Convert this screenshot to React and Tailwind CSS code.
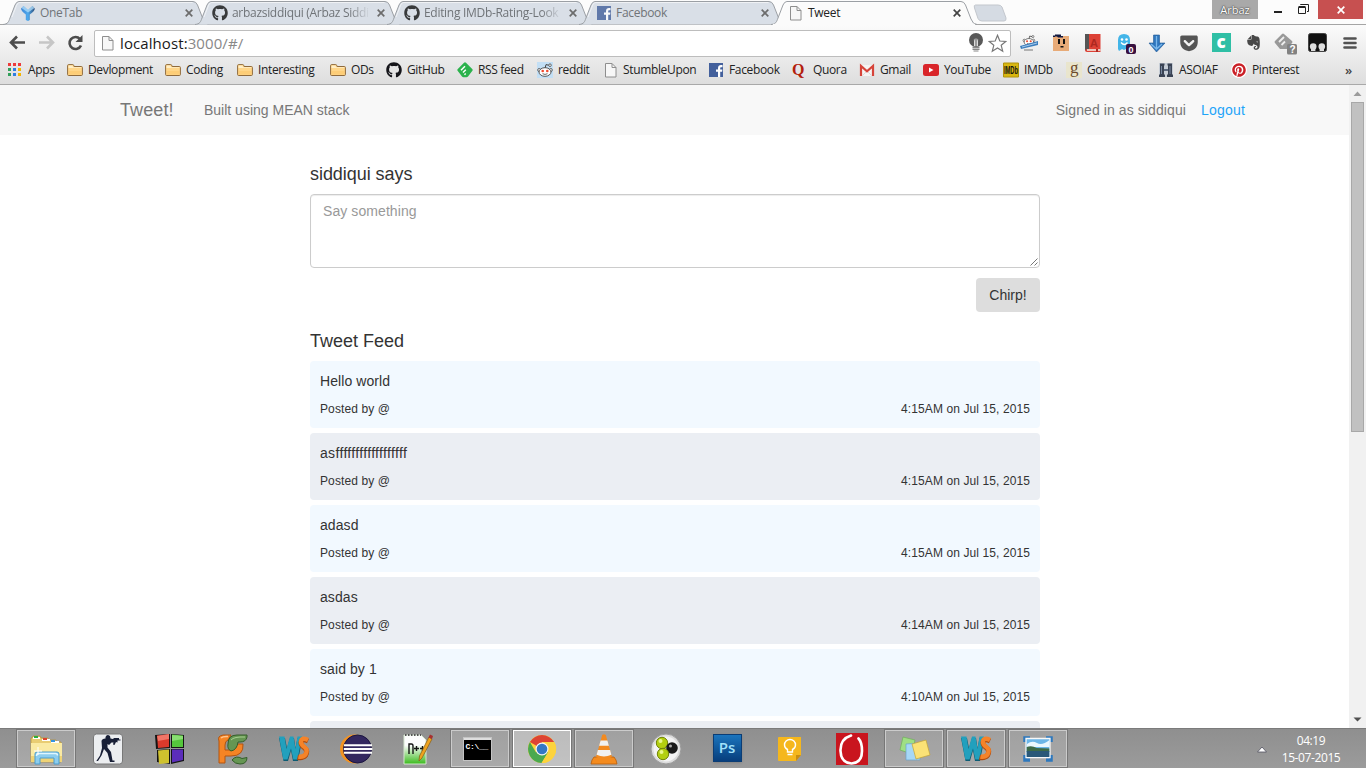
import React from "react";
import { FaGithub, FaPinterest, FaGetPocket, FaEvernote } from "react-icons/fa";

const Svg = ({ s = 16, v = "0 0 16 16", className = "", children }) => (
  <svg width={s} height={s} viewBox={v} className={"shrink-0 " + className}>{children}</svg>
);

/* ---------- small favicons ---------- */
const Page = () => (
  <Svg><path d="M2.500 1.500h6.500l4 4v9.500h-10.500z" fill="#f7f7f7" stroke="#8e8e8e" /><path d="M9 1.500v4h4" fill="none" stroke="#8e8e8e" /></Svg>
);
const Folder = () => (
  <Svg>
    <path d="M.6 12.500V3.600q0-1 1-1h4.200q.8 0 1 1l.3.900h7.300q1 0 1 1v7q0 1-1 1H1.600q-1 0-1-1z" fill="#ffd689" stroke="#8f6a3c" />
    <path d="M1.500 6V4q0-.6.6-.6h3.400L6 5.300h8.200V6z" fill="#ffeec6" />
    <path d="M1.500 9h13v3.500h-13z" fill="#fbc466" opacity=".5" />
  </Svg>
);
const Fb = () => (
  <Svg><path d="M1 1h14v14H1z" fill="#43609c" /><path d="M10 15V9.800H8V7.600h2V6.200C10 4 11.200 3 13 3h1.500v2.200h-1.200c-.9 0-1.100.5-1.100 1.200v1.200h2.200l-.3 2.200h-1.900V15z" fill="#fff" /></Svg>
);
const OneTab = () => (
  <Svg>
    <defs><linearGradient id="ot" x1="0" x2="1"><stop offset="0" stopColor="#1a6fd0" /><stop offset=".5" stopColor="#2b9cf0" /><stop offset="1" stopColor="#062c60" /></linearGradient></defs>
    <path d="M1 3.500Q1 6 5.800 9.500v5.500l2.200 1 1.800-1V9.500Q15 6 14.800 3.500L12.500 1 8 5 3.500 1z" fill="url(#ot)" />
    <path d="M1.500 3 3.500 1 8 4.800 12.500 1l2 2L8 7.500z" fill="#a9dcfb" opacity=".75" />
  </Svg>
);
const Apps = () => (
  <Svg s={14} v="0 0 14 14">
    {["#ed3b3b", "#ed3b3b", "#ed3b3b", "#32a05a", "#2f7de1", "#f4b400", "#32a05a", "#2f7de1", "#f4b400"].map((c, i) => (
      <rect key={i} x={(i % 3) * 5} y={Math.floor(i / 3) * 5} width="3" height="3" fill={c} />
    ))}
  </Svg>
);
const Feedly = () => (
  <Svg>
    <path d="M7 .8q1-1 2 0l6.200 6.200q1 1 0 2L11 14.500q-.6.700-1.500.7h-3q-.9 0-1.500-.7L.8 9q-1-1 0-2z" fill="#2bb24c" />
    <path d="M4 8.300 8 4.300M6 10.500 8.800 7.700M7.500 12.700l1.200-1.200" stroke="#fff" strokeWidth="1.500" fill="none" />
  </Svg>
);
const Alien = () => (
  <g>
    <path d="M8 6.500 9 2.600l3 .7" fill="none" stroke="#444" />
    <circle cx="13" cy="3.200" r="1.300" fill="#fff" stroke="#444" strokeWidth=".8" />
    <circle cx="2.200" cy="8" r="1.500" fill="#fff" stroke="#444" strokeWidth=".8" />
    <circle cx="13.800" cy="8" r="1.500" fill="#fff" stroke="#444" strokeWidth=".8" />
    <ellipse cx="8" cy="10" rx="6" ry="4.300" fill="#fff" stroke="#444" strokeWidth=".9" />
    <circle cx="5.700" cy="9" r="1.300" fill="#f0492d" /><circle cx="10.300" cy="9" r="1.300" fill="#f0492d" />
    <path d="M5.500 11.700q2.500 1.500 5 0" fill="none" stroke="#444" strokeWidth=".8" />
  </g>
);
const Reddit = () => <Svg><path d="M0 0h16v16H0z" fill="#c3dff5" /><Alien /></Svg>;
const Quora = () => <span className="w-4 shrink-0 pr-1 text-center font-['Liberation_Serif',serif] text-[16px] leading-4 font-bold text-[#b3200d]">Q</span>;
const Gmail = () => (
  <Svg><path d="M1 3h14v11H1z" fill="#f6f4f3" /><path d="M2 14V4l6 5.300L14 4v10" fill="none" stroke="#d6443a" strokeWidth="2.200" /><path d="M3.500 13.500 7 10M12.500 13.500 9 10" stroke="#d0d0d0" strokeWidth=".7" /></Svg>
);
const YouTube = () => (
  <Svg><rect x="0" y="2" width="16" height="12" rx="2.500" fill="#d9252a" /><path d="M6 5.500v5l4.500-2.500z" fill="#fff" /></Svg>
);
const Imdb = () => (
  <Svg><path d="M.5 1h15v14H.5z" fill="#d9b70f" stroke="#b0920c" /><text x="1" y="12" fontFamily="Liberation Sans" fontSize="10" fontWeight="bold" textLength="14" lengthAdjust="spacingAndGlyphs" letterSpacing="0" fill="#111">IMDb</text></Svg>
);
const Goodreads = () => (
  <span className="flex h-4 w-4 shrink-0 items-center justify-center bg-[#e9e5cd] pb-1 font-['Liberation_Serif',serif] text-[17px] leading-4 text-[#6b4a2b]">g</span>
);
const Asoiaf = () => (
  <Svg>
    <path d="M1 1h14v14H1z" fill="#c6cdd6" /><path d="M2 1.500h4.500v2H6v9h1V15H1v-2l1-1zM9.500 1.500H14V12l1 1v2H9v-2.500h1v-9h-.5z" fill="#3a4354" />
    <path d="M6 7h4v2H6z" fill="#5d6a80" /><path d="M3.500 4v8M12 4v8" stroke="#7888a0" />
  </Svg>
);

const Ff = "font-['Open_Sans','Noto_Sans',sans-serif]";

const bookmarks = [
  { t: "Apps", i: <Apps />, w: "w-[59px]", g: "gap-[6px]" },
  { t: "Devlopment", i: <Folder />, w: "w-[98px]" },
  { t: "Coding", i: <Folder />, w: "w-[72px]" },
  { t: "Interesting", i: <Folder />, w: "w-[93px]" },
  { t: "ODs", i: <Folder />, w: "w-[56px]" },
  { t: "GitHub", i: <FaGithub size={16} color="#15151a" className="shrink-0" />, w: "w-[71px]" },
  { t: "RSS feed", i: <Feedly />, w: "w-[80px]" },
  { t: "reddit", i: <Reddit />, w: "w-[66px]" },
  { t: "StumbleUpon", i: <Page />, w: "w-[105px]", g: "gap-[4px]" },
  { t: "Facebook", i: <Fb />, w: "w-[84px]" },
  { t: "Quora", i: <Quora />, w: "w-[67px]" },
  { t: "Gmail", i: <Gmail />, w: "w-[64px]" },
  { t: "YouTube", i: <YouTube />, w: "w-[80px]" },
  { t: "IMDb", i: <Imdb />, w: "w-[63px]" },
  { t: "Goodreads", i: <Goodreads />, w: "w-[92px]" },
  { t: "ASOIAF", i: <Asoiaf />, w: "w-[73px]" },
  { t: "Pinterest", i: <span className="rounded-full bg-white p-px"><FaPinterest size={14} color="#cb2027" /></span>, w: "w-[90px]" },
];

/* ---------- tabs ---------- */
const Close = ({ c = "#6c6c6c" }) => (
  <Svg s={8} v="0 0 8 8"><path d="M.7.7l6.600 6.600M7.300.7L.7 7.300" stroke={c} strokeWidth="1.700" /></Svg>
);
function Tab({ icon, title, active, fade }) {
  return (
    <div className={"relative h-[25px] w-[192px] shrink-0 " + (active ? "z-10" : "")}>
      <svg width="208" height="25" viewBox="0 0 208 25" className="absolute top-0 -left-px">
        <path d="M0 24.500C5 24 5.500 22 7 18L12 5Q13.500 1.500 16 1.500H190Q193 1.500 194.500 5L200 19Q202 24.500 206 24.500" fill={active ? "#fbfbfb" : "#d9dfe7"} stroke="#9b9fa4" />
        <path d="M9 17 13.500 5.500Q14.500 2.500 16.500 2.500H189.500" fill="none" stroke="#fff" opacity=".6" />
        {active && <path d="M2 24.500H204" stroke="#fbfbfb" strokeWidth="1.500" />}
      </svg>
      <div className="relative flex h-[25px] items-center pl-4">
        <span className={active ? "" : "opacity-80"}>{icon}</span>
        <div className={"ml-1 w-[138px] text-[12px] leading-[16px] tracking-[-0.3px] whitespace-nowrap " + (active ? "text-[#222]" : "text-[#707478]") + (fade ? " [mask-image:linear-gradient(to_right,#000_85%,transparent)]" : "")}>{title}</div>
        <span className="ml-[7px]"><Close c={active ? "#444" : "#6c6c6c"} /></span>
      </div>
    </div>
  );
}
const gh = <FaGithub size={16} color="#111" />;

/* ---------- extension icons ---------- */
const exts = [
  <Svg key="a" s={20} v="0 0 20 20"><g transform="translate(3.500 1) scale(.8)"><Alien /></g><path d="M1 13 19 8v4L2 16z" fill="#3f7fbd" /><path d="M3 14l15-4" stroke="#a8cbec" /><path d="M5 17h9" stroke="#777" /></Svg>,
  <Svg key="b" s={18} v="0 0 18 18"><path d="M1 2h16v15H1z" fill="#e8ab78" /><path d="M1 3V1.500h2V.5h6V2h2v1.500H6L5 2.500H3V3z" fill="#101840" /><path d="M6 5h2v5H6zM11 5h2v5h-2zM8.500 12h3v1.500h-3z" fill="#111" /></Svg>,
  <Svg key="c" s={18} v="0 0 18 18"><path d="M1 0h15.500v18H3q-2 0-2-2z" fill="#dd4136" /><path d="M1 0h4v15H3q-2 0-2 2z" fill="#555" /><path d="M3 15.200h13.500v1.600H3z" fill="#f2e9df" /><path d="M12 15h2v3h-2z" fill="#b02a22" /><text x="6" y="13" fontFamily="Liberation Sans" fontSize="11" fontWeight="bold" fill="#ad2820">A</text></Svg>,
  <Svg key="d" s={22} v="0 0 22 22"><path d="M4 17V8Q4 2 10 2t6 6v9l-2 1-2-1-2 1-2-1-3 2z" fill="#43b5e8" /><circle cx="8" cy="7.500" r="1.300" fill="#fff" /><circle cx="12.500" cy="7.500" r="1.300" fill="#fff" /><path d="M7 10.500q3.500 4 6.500 0" stroke="#fff" fill="none" strokeWidth="1.300" /><rect x="12" y="12" width="10" height="10" rx="2" fill="#38103f" /><text x="14.500" y="20.500" fontFamily="Liberation Sans" fontSize="9" fontWeight="bold" fill="#fff">0</text></Svg>,
  <Svg key="e" s={18} v="0 0 18 18"><path d="M5.500 1h6v8h5.500l-8.500 9L1 9h4.500z" fill="#2f76bd" stroke="#235b96" strokeWidth=".6" /><path d="M8.500 2v12M3 10l5.500 5 5.500-5" stroke="#7ab8ec" fill="none" strokeWidth="1.300" /></Svg>,
  <FaGetPocket key="f" size={20} color="#555" />,
  <span key="g" className="flex h-[19px] w-[19px] items-center justify-center bg-[#2fbfa5] text-[17px] leading-none font-extrabold text-white"><span className="pb-[3px]">c</span></span>,
  <FaEvernote key="h" size={17} color="#484848" />,
  <Svg key="i" s={24} v="0 0 24 24"><path d="M9 3q1-1 2 0l8 7q1 1 0 2l-5 6H7l-5-6q-1-1 0-2z" fill="#999" /><path d="M6 11l5-5M8.500 14l3.500-3.500" stroke="#eee" strokeWidth="1.800" /><rect x="14" y="13" width="10" height="10.500" rx="1.500" fill="#828282" /><text x="16.500" y="22" fontFamily="Liberation Sans" fontSize="10" fontWeight="bold" fill="#fff">?</text></Svg>,
  <Svg key="j" s={19} v="0 0 19 19"><rect x=".5" y=".5" width="18" height="18" rx="2" fill="#111" stroke="#444" /><circle cx="5.200" cy="13.500" r="3.300" fill="#ddd" /><circle cx="13.800" cy="13.500" r="3.300" fill="#ddd" /><path d="M3 14.500h4.400V18H3zM11.600 14.500H16V18h-4.400z" fill="#ddd" /></Svg>,
  <Svg key="k" s={14} v="0 0 14 14" className="ml-[2px]"><path d="M1.500 2.500h11M1.500 7h11M1.500 11.500h11" stroke="#525252" strokeWidth="2.600" strokeLinecap="round" /></Svg>,
];

/* ---------- taskbar icons ---------- */
const WS = () => (
  <Svg s={32} v="0 0 32 32">
    <path d="M1 5h6l2 10 3-10h4l1.500 10 2-10h5l-4.500 23h-5L13 17.500 10 28H5.500z" fill="#0c5c74" />
    <path d="M1 3.500h5.500L8.500 16l3.500-12.500h3.500L17.500 16l2-12.500h4.500L19.500 26.500h-4.200L13 15.500 9.500 26.500H5.300z" fill="#22a0bd" />
    <path d="M30 8q-6.500-3-7 1.500-.2 3 3.500 5.500t1 7.500q-2.500 3-8 2" fill="none" stroke="#b04a0c" strokeWidth="5" />
    <path d="M30 7q-6.500-3-7 1.500-.2 3 3.500 5.500t1 7.500q-2.500 3-7 2" fill="none" stroke="#f58329" strokeWidth="4.400" />
  </Svg>
);
const Explorer = () => (
  <Svg s={34} v="0 0 34 34">
    <path d="M3 6l1-2h7l1 2h7l1 2h7l1 2h4v20H2V6z" fill="#e9cd73" stroke="#b28f35" strokeWidth=".7" />
    <path d="M4 5h7v2H4zM13 7h8v2h-8zM22 9h8v2h-8z" fill="#fff" />
    <path d="M5 4h4v2H5z" fill="#2aae3c" /><path d="M14 6h4v2h-4z" fill="#dd4330" /><path d="M22 8h4v2h-4z" fill="#3594df" />
    <path d="M2 11h31v19H2z" fill="#faeaa3" /><path d="M2 24h31v6H2z" fill="#efd376" />
    <path d="M6 32V22q0-2 2-2h20q2 0 2 2v10h-5v-6H11v6z" fill="#8dcdee" stroke="#4b9dce" />
    <path d="M7.500 24q0-2.500 2-2.500h17q2 0 2 2" fill="none" stroke="#e0f6ff" strokeWidth="1.500" />
    <path d="M9 15v8M5 19h8" stroke="#fff" strokeWidth="1" />
  </Svg>
);
const CS = () => (
  <Svg s={32} v="0 0 32 32">
    <rect x="1.500" y="1" width="29" height="30" rx="3" fill="#eceef0" stroke="#787878" />
    <path d="M13.500 4q1.500-3.500 4.500-1l.5 2.500 2.500.5 1-1h5v1.500h1.500v1h-3v2l-1.500-.5-1.500 3-1.500-.5.500-2h-2l-2.500 2.500-1.500-1v3.500l3.500 4.500 1.500 8.500h2v1.500h-4.500l-2.500-9-3.500-4-2.500 6.500-3.500 5.500H4.500L4 28.500 8 22.500l2-7.500-.5-7q.5-2.500 4-2.500z" fill="#181f36" />
  </Svg>
);
const Cube = () => (
  <Svg s={34} v="0 0 34 34">
    <path d="M2 3 17 2v14L3 17zM18 2l13 1v13H18zM4 18l13-1v15L4 30zM18 17h13v12l-13 3z" fill="#151515" />
    <path d="M4 3.500 16 2v13L5 16z" fill="#db3a2c" /><path d="M19 2.500l11 1V15H19z" fill="#55c63c" />
    <path d="M5 18.500l11-1V31l-10 1z" fill="#cfc22e" /><path d="M19 17.500h11V28l-11 2.500z" fill="#5b2dbb" />
    <path d="M4 4 16 2v5L5 9z" fill="#ff9d8f" opacity=".6" /><path d="M19 3l11 1v3l-11 2z" fill="#bdf7a8" opacity=".5" />
  </Svg>
);
const PC = () => (
  <Svg s={34} v="0 0 34 34">
    <path d="M4 31V9q-2-5 4-6h8l-3 5q-3 1-3 5v5h6q5 0 5-6h7q1 12-12 12h-6v6q0 1 0 1z" fill="#f58424" stroke="#b25510" />
    <path d="M6 6q2-2 7-1.500" fill="none" stroke="#ffc48c" strokeWidth="1.500" />
    <path d="M13 12Q13 3 22 3h10v2q-1 5-7 5h-2q-1 8-7 9-4-2-3-7z" fill="#669653" stroke="#345e2a" />
    <path d="M16 8q3-3.500 14-3" fill="none" stroke="#a6cf90" />
    <path d="M17 28q4-5 10-1.500l5-1q0 6.500-7 6.500-5 0-8-4z" fill="#669653" stroke="#345e2a" />
  </Svg>
);
const Eclipse = () => (
  <Svg s={34} v="0 0 34 34">
    <circle cx="15.500" cy="17" r="14.500" fill="#f29322" /><circle cx="18.500" cy="17" r="14" fill="#33285f" stroke="#1c1640" />
    <path d="M5 13.300h28M4.800 17h28.500M5 20.700h28" stroke="#fff" strokeWidth="1.900" />
  </Svg>
);
const Npp = () => (
  <Svg s={34} v="0 0 34 34">
    <defs><linearGradient id="np" x1="0" y1="0" x2="0" y2="1"><stop offset=".35" stopColor="#fdfdfd" /><stop offset="1" stopColor="#3aba1c" /></linearGradient></defs>
    <path d="M3 3h17l5 5v24H3z" fill="url(#np)" stroke="#d5e6cf" /><path d="M4 3h16" stroke="#555" strokeWidth="2" strokeDasharray="1.500 1.500" />
    <path d="M8 22V12h2.500q1.500 0 1.500 2v8M13 16.500h5M15.500 14v5M19 16.500h5M21.500 14v5" fill="none" stroke="#151515" strokeWidth="1.400" />
    <path d="M28 5l3 2L21 26l-3 3 .5-5z" fill="#efa21d" stroke="#8a6420" strokeWidth=".8" /><path d="M27.500 5.500l1.500-3 3 1.500-1 3z" fill="#a63030" />
  </Svg>
);
const Cmd = () => (
  <span className="mr-[6px] flex h-6 w-[29px] flex-col border border-[#c4c4c4] bg-black">
    <span className="h-[2px] bg-[#dedede]" />
    <span className="pt-px pl-[2px] font-['Liberation_Mono',monospace] text-[8px] leading-[11px] font-bold tracking-[-0.3px] text-white">C:\__</span>
  </span>
);
const Chrome = () => (
  <Svg s={32} v="0 0 32 32">
    <circle cx="16" cy="16" r="14" fill="#fdd33c" />
    <path d="M16 16 3.900 9A14 14 0 0 1 28.100 9H16z" fill="#dd4434" />
    <path d="M16 16 22 19.500 15.500 30A14 14 0 0 1 3.900 9L10 19.500z" fill="#4aa94f" />
    <path d="M16 9h12.200a14 14 0 0 1-12.500 21L22 19.500z" fill="#fdd33c" />
    <circle cx="16" cy="16" r="6.500" fill="#f4f4f4" /><circle cx="16" cy="16" r="5.300" fill="#3478c5" />
  </Svg>
);
const Vlc = () => (
  <Svg s={32} v="0 0 32 32">
    <path d="M6 24h20l2 3 1 4H3l1-4z" fill="#f48b1e" stroke="#b75e0c" strokeWidth=".8" /><path d="M14.200 2q1.800-1.500 3.600 0L24 24q-8 5-16 0z" fill="#f28a20" />
    <path d="M12.600 7.500h6.800l1.500 5.300h-9.800zM9.900 17h12.200l1.300 4.700q-7.400 3.500-14.800 0z" fill="#f1f1f1" />
  </Svg>
);
const Balls = () => (
  <Svg s={32} v="0 0 32 32">
    <circle cx="16" cy="16" r="15" fill="#dcdcdc" stroke="#9b9b9b" /><circle cx="16" cy="16" r="12.500" fill="#f3f3f3" />
    <circle cx="12" cy="10" r="5.700" fill="#b3cf10" stroke="#718306" /><circle cx="22" cy="15" r="5.800" fill="#191919" /><circle cx="13" cy="21" r="5.700" fill="#b3cf10" stroke="#718306" />
    <circle cx="10.500" cy="8" r="2" fill="#e9f78c" /><circle cx="20.500" cy="13" r="1.500" fill="#aaa" /><circle cx="11.500" cy="19" r="2" fill="#e9f78c" />
  </Svg>
);
const Ps = () => (
  <span className="mr-[2px] mb-[2px] flex h-[28px] w-[29px] items-center justify-center border border-[#0b3d75] bg-linear-to-b from-[#1c75bd] to-[#073e7d] text-[15px] leading-none font-semibold text-[#a1e1fb] shadow-sm">Ps</span>
);
const Keep = () => (
  <Svg s={26} v="0 0 26 26">
    <path d="M2 1h22v18l-5 6H2q-1 0-1-1V2q0-1 1-1z" fill="#f5b71d" /><path d="M19 25v-6h5z" fill="#c98d10" />
    <path d="M10.500 16v-2.500q-3-1.500-3-4.500a5.500 5.500 0 0 1 11 0q0 3-3 4.500V16zM10.500 18.500h5" fill="none" stroke="#fff" strokeWidth="1.400" />
  </Svg>
);
const Opera = () => (
  <Svg s={32} v="0 0 32 32">
    <path d="M0 0h32v32H0z" fill="#c9151e" />
    <path d="M15 2.500Q4 6 4.500 18t11 12.500Q26 30 26 18 26 9 22.500 5.500" fill="none" stroke="#fff" strokeWidth="2.600" strokeLinecap="round" />
  </Svg>
);
const Notes = () => (
  <Svg s={34} v="0 0 34 34">
    <path d="M6 5l12 3-3 14-12-4z" fill="#9fdf84" stroke="#70ad5b" strokeWidth=".7" /><path d="M9 12l14-1v17H9z" fill="#a6d8f6" stroke="#6ca5ca" strokeWidth=".7" />
    <path d="M15 12l14-4 4 15-14 4z" fill="#fbe276" stroke="#c3a333" strokeWidth=".7" />
  </Svg>
);
const Photo = () => (
  <Svg s={32} v="0 0 32 32">
    <path d="M3 9V5H8M24 5h5v4M3 22v5H8M24 27h5v-5" fill="none" stroke="#2e78bd" strokeWidth="3.500" />
    <path d="M4 5.500h24v19H4z" fill="#6cb6e8" stroke="#f8f8f8" strokeWidth="1.300" />
    <path d="M5 11q5-4 10-1t12.500-3v7H5z" fill="#eaf7ff" /><path d="M4.700 14q5-2 10 1l12.600.5V19H4.700z" fill="#3d6a48" /><path d="M4.700 18h22.600v6H4.700z" fill="#2a5878" />
  </Svg>
);
const tasks = [
  [<Explorer />, 1], [<CS />, 0], [<Cube />, 0], [<PC />, 0], [<WS />, 0], [<Eclipse />, 0], [<Npp />, 0], [<Cmd />, 1], [<Chrome />, 2],
  [<Vlc />, 1], [<Balls />, 0], [<Ps />, 0], [<Keep />, 0], [<Opera />, 0], [<Notes />, 1], [<WS />, 1], [<Photo />, 1],
];
const taskCls = [
  "border-transparent",
  "border-[#cbcbcb] bg-white/15 outline outline-[#777]",
  "border-white bg-white/40 outline outline-[#777]",
];

const tweets = [
  ["Hello world", "4:15AM on Jul 15, 2015"],
  ["asffffffffffffffffff", "4:15AM on Jul 15, 2015"],
  ["adasd", "4:15AM on Jul 15, 2015"],
  ["asdas", "4:14AM on Jul 15, 2015"],
  ["said by 1", "4:10AM on Jul 15, 2015"],
  ["", ""],
];

export default function App() {
  return (
    <div className={"flex h-[768px] w-[1366px] flex-col overflow-hidden bg-white " + Ff}>
      <div className="flex h-[25px] shrink-0 justify-between bg-[#fcfcfc] shadow-[inset_0_-1px_0_#a5a5a5]">
        <div className="flex pl-1">
          <Tab icon={<OneTab />} title="OneTab" />
          <Tab icon={gh} title="arbazsiddiqui (Arbaz Siddi" fade />
          <Tab icon={gh} title="Editing IMDb-Rating-Look" fade />
          <Tab icon={<Fb />} title="Facebook" />
          <Tab icon={<Page />} title="Tweet" active />
          <svg width="34" height="19" viewBox="0 0 34 19" className="mt-1 ml-[9px]"><path d="M2.500 1H25q3 0 4 2l4 11q.5 3-2 3H9q-3 0-4-2.500L1.500 4Q.5 1 2.500 1z" fill="#d5dbe3" stroke="#c3c7cd" /></svg>
        </div>
        <div className="flex pr-[3px]">
          <div className="mr-[14px] flex h-[19px] w-[46px] items-center justify-center bg-[#a9a9a9] text-[11px] leading-none text-white [text-shadow:0_0_2px_#333,0_0_1px_#333]">Arbaz</div>
          <div className="flex h-[19px] w-[46px] items-start justify-between pr-[9px]">
            <span className="mt-[11px] ml-[2px] h-[2px] w-2 bg-[#222]" />
            <Svg s={11} v="0 0 11 11" className="mt-1"><path d="M.5 3.500h7v6h-7z" fill="none" stroke="#222" /><path d="M.5 3h7" stroke="#222" strokeWidth="2" /><path d="M2.500 1V.5h8v7H9" fill="none" stroke="#222" /></Svg>
          </div>
          <div className="flex h-[19px] w-[45px] items-center justify-center bg-[#c75050]"><Close c="#fff" /></div>
        </div>
      </div>

      <div className="flex h-[60px] shrink-0 flex-col border-b border-[#a9a9a9] bg-linear-to-b from-[#fbfbfb] to-[#dedede]">
        <div className="flex h-[34px] items-center pt-[2px]">
          <div className="flex w-[94px] items-center gap-[12px] pb-px pl-[9px]">
            <Svg s={17} v="0 0 17 16"><path d="M8 2 2 8l6 6M2 8h14" fill="none" stroke="#4d4d4d" strokeWidth="2.600" /></Svg>
            <Svg s={17} v="0 0 17 16"><path d="M9 2l6 6-6 6M15 8H1" fill="none" stroke="#c6c6c6" strokeWidth="2.600" /></Svg>
            <Svg s={17} v="0 0 17 16"><path d="M13 4.500A6 6 0 1 0 14 11" fill="none" stroke="#4d4d4d" strokeWidth="2.600" /><path d="M15.500.5v7h-7z" fill="#4d4d4d" /></Svg>
          </div>
          <div className="flex h-[27px] w-[917px] items-center rounded-[2px] border border-[#bdbdbd] bg-white pr-[3px] pl-[5px]">
            <Page />
            <div className="ml-1 flex-1 pb-px text-[15px] leading-5 tracking-[0.09px] text-[#1a1a1a]">localhost:<span className="text-[#888]">3000/#/</span></div>
            <Svg s={16} v="0 0 16 20" className="h-5"><circle cx="8" cy="7" r="7" fill="#595959" /><path d="M5.500 13V8q0-3 2.500-3t2.500 3v5" fill="#ddd" stroke="#595959" /><path d="M8 6v7" stroke="#595959" /><path d="M4.500 13.500h7v2h-7zM4.500 16h7v1h-7zM5.500 17.500h5v1h-5z" fill="#888" /></Svg>
            <Svg s={19} v="0 0 19 19" className="ml-[4px]"><path d="M9.500 1.300l2.300 5.700 6 .4-4.600 3.900 1.500 5.900-5.200-3.300-5.200 3.300 1.500-5.900L1.200 7.400l6-.4z" fill="#fff" stroke="#777" strokeWidth="1.200" /></Svg>
          </div>
          <div className="ml-[2px] flex pb-px">
            {exts.map((e, i) => <div key={i} className="flex h-6 w-8 items-center justify-center">{e}</div>)}
          </div>
        </div>
        <div className="flex h-[22px] items-center pl-2 text-[12px] leading-4 tracking-[-0.35px] text-[#222]">
          {bookmarks.map((b) => (
            <div key={b.t} className={"flex shrink-0 items-center whitespace-nowrap " + b.w + " " + (b.g || "gap-[5px]")}>{b.i}<span>{b.t}</span></div>
          ))}
          <span className="ml-6 text-[13px] font-semibold text-[#444]">»</span>
        </div>
      </div>

      <div className="flex h-[643px] shrink-0 font-['Liberation_Sans',Arial,sans-serif] text-[14px] leading-5 text-[#333]">
        <div className="flex h-[643px] w-[1349px] flex-col overflow-hidden">
          <div className="flex h-[50px] shrink-0 items-center bg-[#f8f8f8] pr-[104px] pl-[120px] text-[#777]">
            <span className="w-[84px] text-[18px] tracking-[0.1px]">Tweet!</span>
            <span className="flex-1">Built using MEAN stack</span>
            <span className="mr-[15px] tracking-[0.09px]">Signed in as siddiqui</span>
            <span className="tracking-[0.2px] text-[#1fa4f8]">Logout</span>
          </div>
          <div className="ml-[310px] flex w-[730px] flex-col pt-[29px]">
            <h4 className="text-[18px] leading-5 tracking-[-0.05px]">siddiqui says</h4>
            <div className="relative mt-[10px] h-[74px] rounded-[4px] border border-[#ccc] px-3 py-[6px] tracking-[0.08px] text-[#999] shadow-[inset_0_1px_1px_rgba(0,0,0,0.075)]">
              Say something
              <svg width="8" height="8" viewBox="0 0 8 8" className="absolute right-px bottom-px"><path d="M.5 7.500l7-7M4.500 7.500l3-3" stroke="#666" strokeWidth=".9" /></svg>
            </div>
            <button className="mt-[10px] h-[34px] w-16 self-end rounded-[4px] bg-[#ddd]">Chirp!</button>
            <h4 className="mt-[19px] mb-[10px] text-[18px] leading-5">Tweet Feed</h4>
            {tweets.map(([t, d], i) => (
              <div key={i} className={"mb-[5px] flex h-[67px] shrink-0 flex-col rounded-[4px] p-[10px] " + (i % 2 ? "bg-[#ebeef3]" : "bg-[#f2f9ff]")}>
                <span className={i === 1 ? "tracking-[0.33px]" : "tracking-[0.08px]"}>{t}</span>
                <div className="mt-2 flex justify-between text-[12px] tracking-[0.1px]"><span>{d && "Posted by @"}</span><span>{d}</span></div>
              </div>
            ))}
          </div>
        </div>
        <div className="flex w-[17px] flex-col items-center bg-[#f1f1f1]">
          <div className="flex h-[17px] items-center"><Svg s={9} v="0 0 9 9"><path d="M.5 7l4-4.500 4 4.500z" fill="#9b9b9b" /></Svg></div>
          <div className="h-[330px] w-[13px] border border-[#a8a8a8] bg-[#c1c1c1]" />
          <div className="mt-auto flex h-[17px] items-center"><Svg s={9} v="0 0 9 9"><path d="M.5 2.500h8L4.500 6.500z" fill="#505050" /></Svg></div>
        </div>
      </div>

      <div className="flex h-10 shrink-0 items-start border-t border-[#7b7b7b] bg-linear-to-b from-[#8f8f8f] to-[#9b9b9b] pl-[17px]">
        <div className="flex gap-[4px]">
          {tasks.map(([ic, st], i) => <div key={i} className={"mt-px flex h-[37px] w-[58px] items-center justify-center border " + taskCls[st]}>{ic}</div>)}
        </div>
        <Svg s={10} v="0 0 10 8" className="mt-[15px] ml-[190px]"><path d="M.5 7l4.500-5 4.500 5z" fill="#fff" stroke="#505060" strokeWidth=".8" /></Svg>
        <div className="ml-[4px] flex w-[80px] flex-col items-center pt-[3px] text-[12px] leading-[17px] tracking-[-0.4px] text-white"><span>04:19</span><span>15-07-2015</span></div>
      </div>
    </div>
  );
}
